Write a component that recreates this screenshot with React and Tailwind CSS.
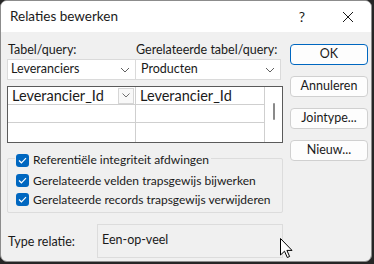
import React from "react";

function Chevron({ className = "" }) {
  return (
    <svg width="10" height="6" viewBox="0 0 10 6" className={className}>
      <path d="M1 1 L5 5 L9 1" fill="none" stroke="#606060" strokeWidth="1" />
    </svg>
  );
}

function Check() {
  return (
    <span className="flex h-[13px] w-[13px] shrink-0 items-center justify-center rounded-[3px] bg-[#0067c0]">
      <svg width="9" height="7" viewBox="0 0 9 7">
        <path d="M1 3.5 L3.4 5.8 L8 1.2" fill="none" stroke="#ffffff" strokeWidth="1.2" />
      </svg>
    </span>
  );
}

function Btn({ children, primary }) {
  return (
    <div
      className={`flex h-[21px] w-[78px] items-center justify-center rounded-[4px] bg-[#fdfdfd] text-[12.5px] text-[#1a1a1a] ${
        primary ? "border border-[#0067c0]" : "border border-[#d0d0d0]"
      }`}
    >
      {children}
    </div>
  );
}

export default function App() {
  return (
    <div
      className="relative h-[264px] w-[374px] whitespace-nowrap bg-[#262626]"
      style={{ fontFamily: 'Lato, "Noto Sans", sans-serif' }}
    >
      <div className="flex h-[262px] w-[372px] flex-col overflow-hidden rounded-[7px] border border-[#8c8c8c] bg-[#f0f0f0]">
        <div className="flex h-[31px] shrink-0 items-center bg-white pl-[9px] text-[13.5px] text-[#1a1a1a]">
          <span>Relaties bewerken</span>
          <span className="ml-auto mr-[37px] text-[14px]">?</span>
          <svg width="12" height="12" viewBox="0 0 12 12" className="mr-[17px]">
            <path d="M1 1 L11 11 M11 1 L1 11" stroke="#1a1a1a" strokeWidth="1" />
          </svg>
        </div>
        <div className="flex flex-1">
          <div className="ml-[6px] flex w-[276px] flex-col">
            <div className="mt-[9px] flex h-[18px] items-center text-[12.5px] text-[#1a1a1a]">
              <span className="w-[129px] pl-[1px]">Tabel/query:</span>
              <span>Gerelateerde tabel/query:</span>
            </div>
            <div className="flex h-[21px]">
              <div className="flex w-[129px] items-center border border-[#dadada] bg-white pl-[3px] pr-[5px] text-[12.5px] text-[#1a1a1a]">
                <span>Leveranciers</span>
                <Chevron className="ml-auto" />
              </div>
              <div className="flex w-[145px] items-center border border-l-0 border-[#dadada] bg-white pl-[5px] pr-[5px] text-[12.5px] text-[#1a1a1a]">
                <span>Producten</span>
                <Chevron className="ml-auto" />
              </div>
            </div>
            <div className="mt-[6px] flex h-[57px] border border-[#5a5a5a] bg-white text-[14.5px] text-[#1a1a1a]">
              <div className="flex w-[256px] flex-col">
                <div className="flex h-[18px] border-b border-[#cfcfcf]">
                  <div className="flex w-[128px] items-center border-r border-[#cfcfcf] pl-[4px]">
                    <span>Leverancier_Id</span>
                    <div className="ml-auto mr-[1px] flex h-[16px] w-[16px] items-center justify-center border border-[#d6d6d6] bg-[#f8f8f8]">
                      <svg width="8" height="5" viewBox="0 0 8 5">
                        <path d="M0.5 0.5 L4 4 L7.5 0.5" fill="none" stroke="#707070" strokeWidth="1" />
                      </svg>
                    </div>
                  </div>
                  <div className="flex flex-1 items-center pl-[4px]">Leverancier_Id</div>
                </div>
                <div className="flex h-[18px] border-b border-[#cfcfcf]">
                  <div className="w-[128px] border-r border-[#cfcfcf]" />
                  <div className="flex-1" />
                </div>
                <div className="flex flex-1">
                  <div className="w-[128px] border-r border-[#cfcfcf]" />
                  <div className="flex-1" />
                </div>
              </div>
              <div className="flex flex-1 justify-center border-l border-[#cfcfcf]">
                <div className="mt-[16px] h-[17px] w-[2px] rounded-full bg-[#8a8a8a]" />
              </div>
            </div>
            <div className="relative mt-[15px] h-[55px] rounded-[2px] border border-[#dcdcdc]">
              <div className="absolute left-[7px] top-[-8px] flex items-center bg-[#f0f0f0] pl-[1px] pr-[2px] text-[12px] text-[#1a1a1a]">
                <Check />
                <span className="ml-[4px]">Referentiële integriteit afdwingen</span>
              </div>
              <div className="ml-[8px] mt-[14px] flex flex-col gap-[4px] text-[12px] text-[#1a1a1a]">
                <div className="flex h-[15px] items-center">
                  <Check />
                  <span className="ml-[4px]">Gerelateerde velden trapsgewijs bijwerken</span>
                </div>
                <div className="flex h-[15px] items-center">
                  <Check />
                  <span className="ml-[4px]">Gerelateerde records trapsgewijs verwijderen</span>
                </div>
              </div>
            </div>
            <div className="mt-[11px] flex h-[34px] items-center text-[12.5px] text-[#1a1a1a]">
              <span className="w-[90px] pl-[1px] pt-[3px]">Type relatie:</span>
              <div className="flex h-[34px] flex-1 items-center border border-[#dcdcdc] pb-[2px] pl-[4px]">
                Een-op-veel
              </div>
            </div>
          </div>
          <div className="ml-[7px] mt-[12px] flex flex-col gap-[11px]">
            <Btn primary>OK</Btn>
            <Btn>Annuleren</Btn>
            <Btn>Jointype...</Btn>
            <Btn>Nieuw...</Btn>
          </div>
        </div>
      </div>
      <svg
        width="13"
        height="21"
        viewBox="0 0 13 21"
        className="absolute left-[280px] top-[238px]"
      >
        <path
          d="M0.5 0.5 L0.5 17 L4.5 13.2 L7.3 19.5 L9.6 18.5 L6.9 12.4 L12 12.4 Z"
          fill="#ffffff"
          stroke="#000000"
          strokeWidth="1"
          strokeLinejoin="round"
        />
      </svg>
    </div>
  );
}
